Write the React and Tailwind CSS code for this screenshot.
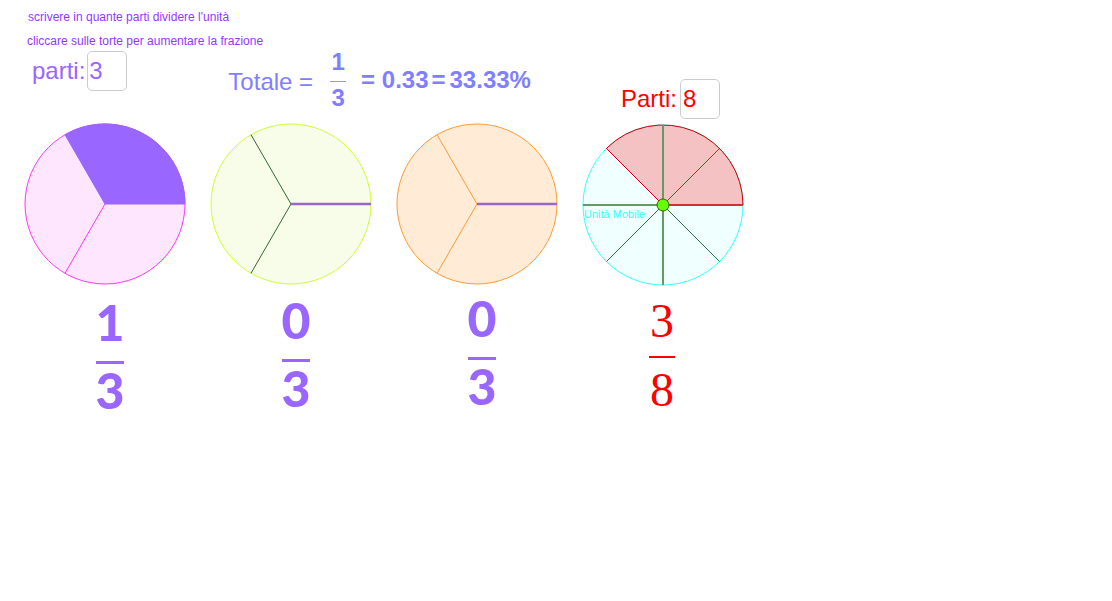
import React from "react";

// small helpers for the pie drawings
const C = 82;
const R = 80;
const pt = (deg, r = R) => {
    const a = (deg * Math.PI) / 180;
    return [C + r * Math.cos(a), C - r * Math.sin(a)];
};

const Radius = ({ deg, stroke, width = 1 }) => {
    const [x, y] = pt(deg);
    return <line x1={C} y1={C} x2={x} y2={y} stroke={stroke} strokeWidth={width} />;
};

const Sector = ({ to, fill, stroke, width = 1 }) => {
    const [x, y] = pt(to);
    const large = to > 180 ? 1 : 0;
    return (
        <path
            d={`M${C},${C} L${C + R},${C} A${R},${R} 0 ${large} 0 ${x},${y} Z`}
            fill={fill}
            stroke={stroke}
            strokeWidth={width}
        />
    );
};

const PieOne = () => (
    <svg width="164" height="164" viewBox="0 0 164 164">
        <circle cx={C} cy={C} r={R} fill="#ffe6ff" stroke="#ff33ff" strokeWidth="1" />
        <Sector to={120} fill="#9966ff" stroke="#9966ff" />
        <Radius deg={240} stroke="#ff33ff" />
    </svg>
);

const PieThird = ({ fill, stroke, radius }) => (
    <svg width="164" height="164" viewBox="0 0 164 164">
        <circle cx={C} cy={C} r={R} fill={fill} stroke={stroke} strokeWidth="1" />
        <Radius deg={120} stroke={radius} />
        <Radius deg={240} stroke={radius} />
        <Radius deg={0} stroke="#9966cc" width={2.5} />
    </svg>
);

const PieEight = () => (
    <svg width="164" height="164" viewBox="0 0 164 164">
        <circle cx={C} cy={C} r={R} fill="#f0ffff" stroke="#33ffff" strokeWidth="1" />
        <Sector to={135} fill="#f4c2c2" stroke="#cc0000" width={1} />
        {[45, 225, 315].map((d) => (
            <Radius key={d} deg={d} stroke="#005500" width={0.8} />
        ))}
        <Radius deg={135} stroke="#cc0000" width={0.8} />
        <Radius deg={90} stroke="#669966" width={2} />
        <Radius deg={270} stroke="#669966" width={2} />
        <Radius deg={180} stroke="#669966" width={2} />
        <Radius deg={0} stroke="#cc3333" width={2} />
        <text x="3" y="95" fontSize="11" fill="#33ffff" fontFamily="'Liberation Sans', Arial, sans-serif">
            Unità Mobile
        </text>
        <circle cx={C} cy={C} r="6" fill="#66ff00" stroke="#336600" strokeWidth="1" />
    </svg>
);

const BigFraction = ({ num, den, className = "" }) => (
    <div className={`flex flex-col items-center font-['Lato',sans-serif] font-black text-[50px] leading-[50px] text-[#9966ff] ${className}`}>
        <span>{num}</span>
        <span className="mt-[14px] h-[3px] w-[28px] bg-[#9966ff]" />
        <span className="mt-[1px]">{den}</span>
    </div>
);

export default function App() {
    return (
        <div className="relative w-[1112px] h-[601px] overflow-hidden bg-white font-['Liberation_Sans',Arial,sans-serif]">
            {/* instructions */}
            <div className="pt-[10px] pl-[28px] text-[12px] leading-[14px] text-[#9933ff]">
                <p>scrivere in quante parti dividere l'unità</p>
                <p className="mt-[10px] -ml-[1px]">cliccare sulle torte per aumentare la frazione</p>
            </div>

            {/* header row */}
            <div className="flex items-start h-[74px]">
                <div className="ml-[32px] mt-[3px] flex items-center">
                    <span className="text-[24px] leading-[28px] text-[#9966ff]">parti:</span>
                    <div className="ml-[2px] w-[40px] h-[40px] rounded-[5px] border border-[#cccccc] pl-[1px] text-[24px] leading-[38px] text-[#9966ff]">
                        3
                    </div>
                </div>

                <div className="ml-[101px] flex items-start text-[#8080ff]">
                    <span className="mt-[20px] text-[24px] leading-[28px]">Totale =</span>
                    <div className="ml-[17px] flex flex-col items-center w-[16px] font-bold text-[24px] leading-[26px]">
                        <span className="mt-[1px]">1</span>
                        <span className="mt-[6px] h-[1px] w-[16px] bg-[#9999dd]" />
                        <span className="mt-[3px]">3</span>
                    </div>
                    <span className="ml-[15px] mt-[18px] font-bold text-[24px] leading-[28px] whitespace-pre">
                        = 0.33<span className="ml-[3px] mr-[4px]">=</span>33.33%
                    </span>
                </div>

                <div className="ml-[90px] mt-[31px] flex items-center">
                    <span className="text-[24px] leading-[28px] text-[#ff0000]">Parti:</span>
                    <div className="ml-[3px] w-[40px] h-[40px] rounded-[5px] border border-[#cccccc] pl-[2px] text-[24px] leading-[38px] text-[#ff0000]">
                        8
                    </div>
                </div>
            </div>

            {/* pies */}
            <div className="flex ml-[23px] gap-[22px]">
                <PieOne />
                <PieThird fill="#f7fde8" stroke="#ccff33" radius="#336633" />
                <PieThird fill="#ffebd6" stroke="#ff9933" radius="#ff9933" />
                <div className="mt-[1px]">
                    <PieEight />
                </div>
            </div>

            {/* fractions */}
            <div className="flex items-start ml-[17px]">
                <div className="w-[186px] flex justify-center">
                    <BigFraction num="1" den="3" className="mt-[10px]" />
                </div>
                <div className="w-[186px] flex justify-center">
                    <BigFraction num="0" den="3" className="mt-[8px]" />
                </div>
                <div className="w-[186px] flex justify-center">
                    <BigFraction num="0" den="3" className="mt-[6px]" />
                </div>
                <div className="w-[186px] flex justify-center pr-[12px]">
                    <div className="mt-[10px] flex flex-col items-center font-['Liberation_Serif',serif] text-[48px] leading-[48px] text-[#ff0000]">
                        <span>3</span>
                        <span className="mt-[11px] h-[2px] w-[26px] bg-[#ff0000]" />
                        <span className="mt-[8px]">8</span>
                    </div>
                </div>
            </div>
        </div>
    );
}
